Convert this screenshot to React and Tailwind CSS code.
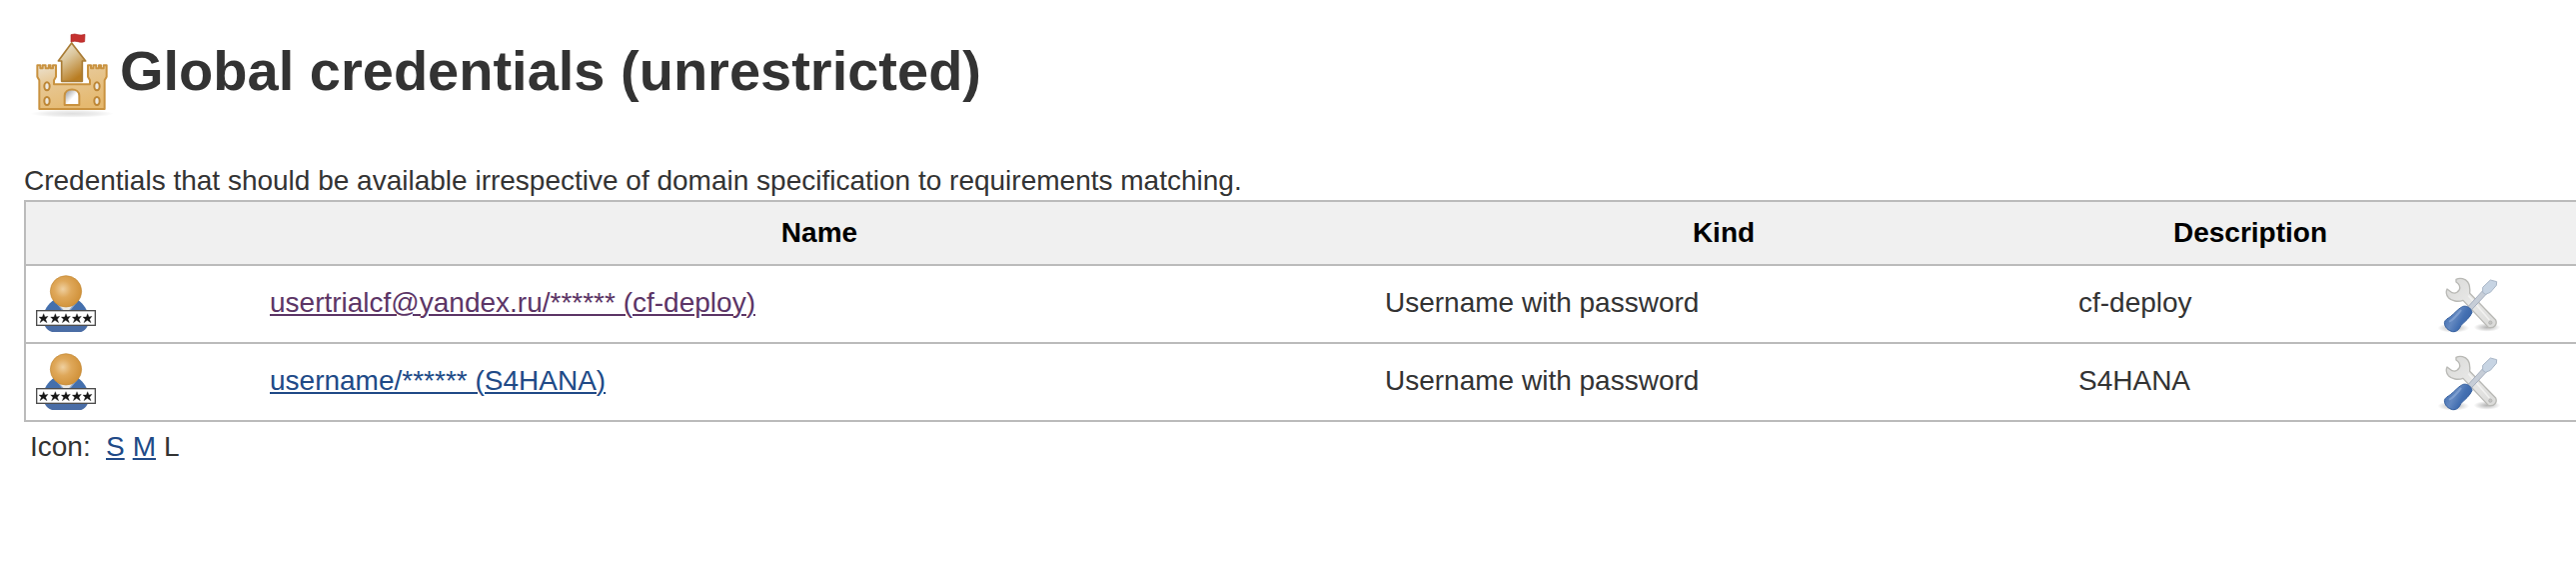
const credentials = [
  { name: 'usertrialcf@yandex.ru/****** (cf-deploy)', kind: 'Username with password', description: 'cf-deploy', visited: true },
  { name: 'username/****** (S4HANA)', kind: 'Username with password', description: 'S4HANA', visited: false },
];

function CastleIcon() {
  return (
    <svg className="h-[110px] w-[94px] shrink-0" viewBox="12 0 282 330" aria-hidden="true">
      <defs>
        <linearGradient id="tower" x1="0" y1="0" x2="0.5" y2="1">
          <stop offset="0" stopColor="#f3efe2" />
          <stop offset="0.45" stopColor="#dbc69c" />
          <stop offset="1" stopColor="#b97d22" />
        </linearGradient>
        <linearGradient id="wall" x1="0" y1="0" x2="0.5" y2="1">
          <stop offset="0" stopColor="#ece3d2" />
          <stop offset="0.4" stopColor="#e7c793" />
          <stop offset="1" stopColor="#e5b970" />
        </linearGradient>
        <linearGradient id="door" x1="0" y1="0" x2="1" y2="1">
          <stop offset="0.15" stopColor="#a9a9a9" />
          <stop offset="0.55" stopColor="#fff" />
        </linearGradient>
        <radialGradient id="castleShadow">
          <stop offset="0" stopColor="#000" stopOpacity="0.13" />
          <stop offset="0.6" stopColor="#000" stopOpacity="0.07" />
          <stop offset="1" stopColor="#000" stopOpacity="0" />
        </radialGradient>
      </defs>
      <ellipse cx="157" cy="281" rx="125" ry="12" fill="url(#castleShadow)" />
      <path d="M153 44q12-4 21 0q10 3 21-1l-1 22q-10 4-20 0q-10-3-21 1z" fill="#c5312f" stroke="#ae2422" strokeWidth="2" />
      <path d="M155 69L197 123H187V184H125V123H115Z" fill="url(#tower)" stroke="#a97c35" strokeWidth="5" strokeLinejoin="round" />
      <path
        d="M52 136H61V145H68V136H77V145H86V136H92V145H99V136H108V170L102 181V193H210V181L204 170V136H213V145H220V136H229V145H237V136H243V145H251V136H260V170L254 181V267H58V181L52 170Z"
        fill="url(#wall)" stroke="#c9923f" strokeWidth="6" strokeLinejoin="round"
      />
      <path d="M134 255V227C134 202 178 202 178 227V255Z" fill="url(#door)" stroke="#c9923f" strokeWidth="6" strokeLinejoin="round" />
      <g fill="#eee8dd" stroke="#bd8635" strokeWidth="6">
        <ellipse cx="81" cy="199" rx="8" ry="12" />
        <ellipse cx="231" cy="199" rx="8" ry="12" />
        <ellipse cx="81" cy="243" rx="8" ry="12" />
        <ellipse cx="231" cy="243" rx="8" ry="12" />
      </g>
    </svg>
  );
}

const starPositions = [70, 105, 137, 170, 202];

function UserIcon() {
  return (
    <svg className="size-16" viewBox="36 30 192 192" aria-hidden="true">
      <defs>
        <radialGradient id="head" cx="0.4" cy="0.43" r="0.6">
          <stop offset="0" stopColor="#efd0a0" />
          <stop offset="0.45" stopColor="#dfa85a" />
          <stop offset="1" stopColor="#d1923a" />
        </radialGradient>
        <linearGradient id="body" x1="0" y1="0" x2="0" y2="1">
          <stop offset="0" stopColor="#4270af" />
          <stop offset="1" stopColor="#4b6da5" />
        </linearGradient>
      </defs>
      <path d="M102 113C84 126 72 142 70 168C70 187 76 203 96 210H184C201 203 208 187 206 168C203 142 191 126 174 113Z" fill="url(#body)" />
      <path d="M104 118L126 145H152L174 118L158 128H116Z" fill="#8da6ca" />
      <path d="M117 128L131 145H147L160 128Z" fill="#ece9e4" />
      <circle cx="138" cy="88" r="47" fill="url(#head)" stroke="#c38937" strokeWidth="2" />
      <rect x="50" y="146" width="176" height="44" fill="#fff" stroke="#4d4d4d" strokeWidth="4" />
      {starPositions.map((x) => (
        <path
          key={x}
          transform={`translate(${x} 169)`}
          d="M1-14L5-4L14-6L7 3L11 13L0 6L-10 13L-6 3L-13-4L-3-4Z"
          fill="#161616" stroke="#161616" strokeWidth="1"
        />
      ))}
    </svg>
  );
}

function ToolsIcon() {
  return (
    <svg className="size-16" viewBox="54 30 192 192" aria-hidden="true">
      <defs>
        <linearGradient id="wrench" x1="0" y1="0" x2="1" y2="1">
          <stop offset="0" stopColor="#d9d9d7" />
          <stop offset="0.5" stopColor="#e8e8e7" />
          <stop offset="1" stopColor="#d9d9d7" />
        </linearGradient>
        <linearGradient id="handle" x1="0" y1="0.3" x2="1" y2="0.8">
          <stop offset="0" stopColor="#3f6cb0" />
          <stop offset="0.35" stopColor="#6489c1" />
          <stop offset="0.6" stopColor="#4470b2" />
          <stop offset="1" stopColor="#365f9f" />
        </linearGradient>
        <radialGradient id="toolShadow">
          <stop offset="0" stopColor="#000" stopOpacity="0.3" />
          <stop offset="1" stopColor="#000" stopOpacity="0" />
        </radialGradient>
      </defs>
      <ellipse cx="106" cy="198" rx="48" ry="14" fill="url(#toolShadow)" />
      <ellipse cx="207" cy="196" rx="40" ry="13" fill="url(#toolShadow)" />
      <path
        d="M114 52C126 46 142 50 149 60C156 70 156 82 155 94L233 174C239 188 227 200 211 196L135 115C119 121 101 117 91 107C84 98 83 89 87 81L102 92C110 95 119 91 124 83C127 75 125 67 114 60Z"
        fill="url(#wrench)" stroke="#b9b9b5" strokeWidth="4" strokeLinejoin="round"
      />
      <path d="M151 101L214 174" stroke="#f8f8f7" strokeWidth="5" opacity="0.7" />
      <circle cx="217" cy="182" r="5" fill="#c5c5c2" stroke="#aaa" strokeWidth="2" />
      <path d="M151 133L194 86L205 96L160 144Z" fill="#c6cdd7" stroke="#a7b0bf" strokeWidth="3" />
      <path d="M194 91V76L217 54L236 59L235 70L217 91L202 97Z" fill="#c7d4e3" stroke="#a9b6c7" strokeWidth="3" strokeLinejoin="round" />
      <path d="M133 134C144 129 159 137 162 151C156 167 140 179 128 191C124 203 115 210 104 209C90 206 79 195 79 182C81 172 89 170 97 164C109 155 119 141 133 134Z" fill="url(#handle)" stroke="#345f9f" strokeWidth="3" />
      <path d="M128 146C117 159 110 169 95 178" fill="none" stroke="#9ab6df" strokeWidth="6" strokeLinecap="round" opacity="0.5" />
    </svg>
  );
}

export default function App() {
  return (
    <main className="h-[566px] w-full overflow-hidden bg-white pl-6 font-['Liberation_Sans',Arial,sans-serif] text-[28px] leading-8 text-[#333]">
      <header className="flex h-[150px] items-start pt-5">
        <CastleIcon />
        <h1 className="pt-[19px] pl-[2px] text-[56px] leading-[64px] font-bold whitespace-nowrap">Global credentials (unrestricted)</h1>
      </header>
      <p className="h-[50px] pt-[15px] whitespace-nowrap">
        Credentials that should be available irrespective of domain specification to requirements matching.
      </p>
      <table className="w-[2580px] table-fixed border-separate border-spacing-0 border-t-2 border-l-2 border-[#bbb]">
        <colgroup>
          <col className="w-[236px]" />
          <col className="w-[1116px]" />
          <col className="w-[694px]" />
          <col className="w-[360px]" />
          <col />
        </colgroup>
        <thead>
          <tr className="h-16 bg-[#f0f0f0] text-black">
            <th className="border-b-2 border-[#bbb]" />
            <th className="border-b-2 border-[#bbb] text-center">Name</th>
            <th className="border-b-2 border-[#bbb] text-center">Kind</th>
            <th className="border-b-2 border-[#bbb] text-center">Description</th>
            <th className="border-b-2 border-[#bbb]" />
          </tr>
        </thead>
        <tbody>
          {credentials.map((item) => (
            <tr key={item.name} className="h-[78px]">
              <td className="border-b-2 border-[#bbb] p-[6px]"><UserIcon /></td>
              <td className="border-b-2 border-[#bbb] px-2 pb-[2px]">
                <a
                  href="#"
                  className={item.visited ? 'text-[#5c3566] underline decoration-2 underline-offset-2' : 'text-[#204a87] underline decoration-2 underline-offset-2'}
                >
                  {item.name}
                </a>
              </td>
              <td className="border-b-2 border-[#bbb] px-2 pb-[2px]">{item.kind}</td>
              <td className="border-b-2 border-[#bbb] px-2 pb-[2px]">{item.description}</td>
              <td className="border-b-2 border-[#bbb] p-[6px]"><ToolsIcon /></td>
            </tr>
          ))}
        </tbody>
      </table>
      <footer className="flex pt-[9px] pl-[6px]">
        <span className="w-[76px]">Icon:</span>
        <a href="#" className="mr-2 text-[#204a87] underline decoration-2 underline-offset-2">S</a>
        <a href="#" className="mr-2 text-[#204a87] underline decoration-2 underline-offset-2">M</a>
        <span>L</span>
      </footer>
    </main>
  );
}
